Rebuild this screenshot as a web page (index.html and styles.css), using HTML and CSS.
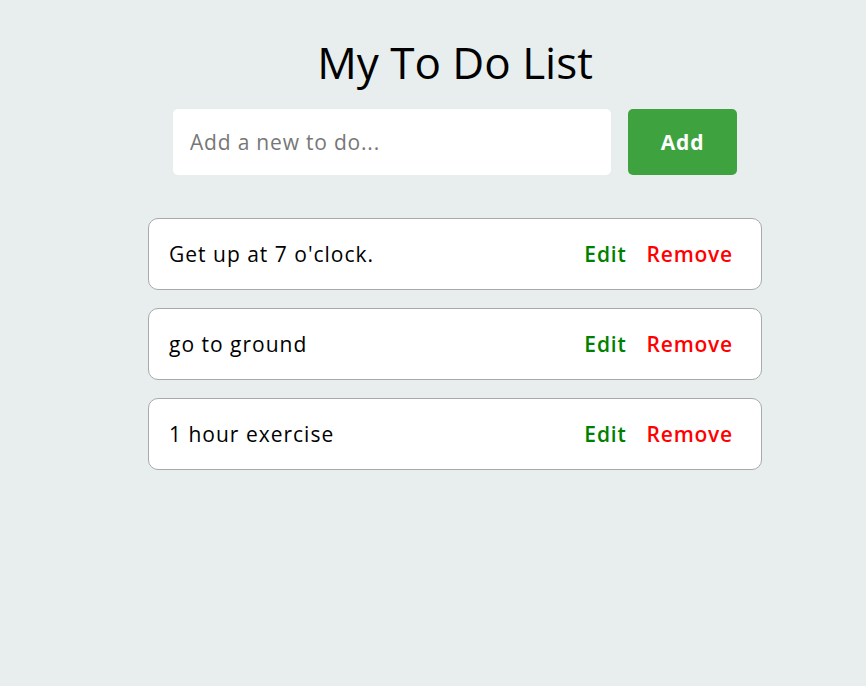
FILE: index.html
```html
<!DOCTYPE html>
<html lang="en">
<head>
<meta charset="utf-8">
<title>My To Do List</title>
<link rel="stylesheet" href="styles.css">
</head>
<body>
<main class="app">
  <h1 class="title">My To Do List</h1>
  <form class="add-form">
    <input class="add-input" type="text" placeholder="Add a new to do...">
    <button class="add-btn" type="button">Add</button>
  </form>
  <ul class="todo-list">
    <li class="todo-item">
      <span class="todo-text">Get up at 7 o'clock.</span>
      <span class="todo-actions"><span class="edit">Edit</span><span class="remove">Remove</span></span>
    </li>
    <li class="todo-item">
      <span class="todo-text">go to ground</span>
      <span class="todo-actions"><span class="edit">Edit</span><span class="remove">Remove</span></span>
    </li>
    <li class="todo-item">
      <span class="todo-text">1 hour exercise</span>
      <span class="todo-actions"><span class="edit">Edit</span><span class="remove">Remove</span></span>
    </li>
  </ul>
</main>
</body>
</html>
```
FILE: styles.css
```css
* { box-sizing: border-box; }
html, body { margin: 0; padding: 0; }
body {
  background: #e7eeed;
  font-family: "Open Sans", "DejaVu Sans", sans-serif;
  color: #000;
  min-height: 686px;
  padding-left: 44px;
}
.app {
  width: 614px;
  margin: 0 auto;
  display: flex;
  flex-direction: column;
  align-items: center;
  padding-top: 32px;
}
.title {
  margin: 0;
  font-size: 44px;
  font-weight: 400;
  line-height: 60px;
}
.add-form {
  display: flex;
  gap: 17px;
  margin-top: 17px;
}
.add-input {
  width: 438px;
  height: 66px;
  border: none;
  border-radius: 5px;
  background: #fff;
  padding: 0 17px;
  font-family: inherit;
  font-size: 21px;
  letter-spacing: 0.8px;
  outline: none;
}
.add-input::placeholder { color: #777; }
.add-btn {
  width: 109px;
  height: 66px;
  border: none;
  border-radius: 5px;
  background: #3ea33e;
  color: #fff;
  font-family: inherit;
  font-size: 21px;
  letter-spacing: 0.8px;
  font-weight: 700;
}
.todo-list {
  list-style: none;
  margin: 43px 0 0;
  padding: 0;
  width: 614px;
  display: flex;
  flex-direction: column;
  gap: 18px;
}
.todo-item {
  height: 72px;
  background: #fff;
  border: 1px solid #a9a9a9;
  border-radius: 10px;
  display: flex;
  align-items: center;
  justify-content: space-between;
  padding: 0 28px 0 20px;
  font-size: 21px;
  letter-spacing: 1px;
}
.todo-actions { display: flex; gap: 20px; font-weight: 600; letter-spacing: 0.8px; }
.edit { color: #008000; }
.remove { color: #ff0000; }
```
